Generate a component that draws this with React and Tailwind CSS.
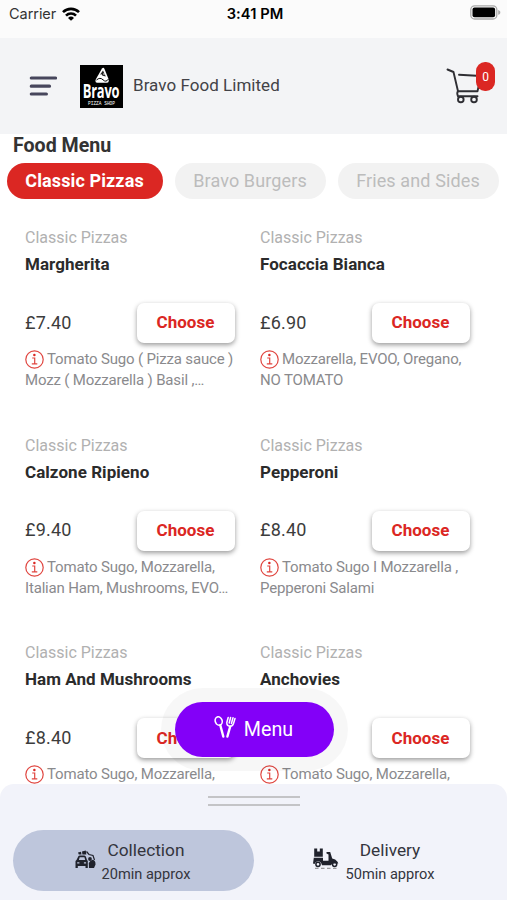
const tabs = [
  { name: 'Classic Pizzas', className: 'w-[156px] bg-[#db2723] text-white font-bold' },
  { name: 'Bravo Burgers', className: 'w-[151px] bg-[#f2f2f2] text-[#bcbcbc]' },
  { name: 'Fries and Sides', className: 'w-[161px] bg-[#f2f2f2] text-[#bcbcbc]' },
]

const items = [
  { name: 'Margherita', price: '£7.40', lines: ['Tomato Sugo ( Pizza sauce )', 'Mozz ( Mozzarella ) Basil ,…'] },
  { name: 'Focaccia Bianca', price: '£6.90', lines: ['Mozzarella, EVOO, Oregano,', 'NO TOMATO'] },
  { name: 'Calzone Ripieno', price: '£9.40', lines: ['Tomato Sugo, Mozzarella,', 'Italian Ham, Mushrooms, EVO…'] },
  { name: 'Pepperoni', price: '£8.40', lines: ['Tomato Sugo I Mozzarella ,', 'Pepperoni Salami'] },
  { name: 'Ham And Mushrooms', price: '£8.40', lines: ['Tomato Sugo, Mozzarella,'] },
  { name: 'Anchovies', price: '£8.40', lines: ['Tomato Sugo, Mozzarella,'] },
]

const WifiIcon = () => (
  <svg className="w-[18px] h-[14px]" viewBox="0 0 18 14" preserveAspectRatio="none" fill="none" stroke="#000" strokeWidth="2.6">
    <path d="M1 5.2a11.3 11.3 0 0116 0" />
    <path d="M4 8.6a7 7 0 0110 0" />
    <path d="M9 13.8L6 10.9a4.3 4.3 0 016 0z" fill="#000" stroke="none" />
  </svg>
)

const BatteryIcon = () => (
  <svg className="w-[31px] h-[15px]" viewBox="0 0 31 15" fill="none">
    <rect x="0.8" y="0.8" width="26" height="13.2" rx="3.8" stroke="#a9a9a9" strokeWidth="1.3" />
    <rect x="2.5" y="2.5" width="22.6" height="9.8" rx="2" fill="#000" />
    <path d="M28.2 5c1.4.4 2.1 1.3 2.1 2.4s-.7 2-2.1 2.4z" fill="#a9a9a9" />
  </svg>
)

const MenuLines = () => (
  <svg className="w-7 h-5" viewBox="0 0 28 20" stroke="#47465c" strokeWidth="3.2" strokeLinecap="round">
    <path d="M2.3 2H26.500M2.300 10.200H20.500M2.300 18H17.400" />
  </svg>
)

const Logo = () => (
  <div className="w-[43px] h-[43px] bg-black text-white flex flex-col items-center overflow-hidden">
    <svg className="w-[15px] h-4 mt-[2px] ml-[2px] shrink-0" viewBox="0 0 15 16">
      <path d="M1 12L7 1.5Q8.500-.2 9.500 2L13.500 12Q14.500 15.800 12 15.800H2Q-.5 15 1 12z" fill="#fff" />
      <path d="M4.800 8L8 3.500L10.800 9.500z" fill="#222" />
      <path d="M1.500 13Q5 9.800 8 12.800T13.500 12" fill="none" stroke="#000" strokeWidth="1" />
      <circle cx="6" cy="8.500" r="1.200" fill="#fff" />
      <circle cx="9" cy="7" r=".8" fill="#fff" />
    </svg>
    <div className="font-['Open_Sans',sans-serif] font-bold text-[17px] leading-[17px] tracking-[-0.300px] scale-x-[0.76] scale-y-[1.100] -mt-px">
      Bravo
    </div>
    <div className="font-['Liberation_Mono',monospace] text-[4.500px] leading-[5px] tracking-[0px] mt-[2px] whitespace-nowrap">
      PIZZA SHOP
    </div>
  </div>
)

const CartIcon = () => (
  <svg className="w-[36px] h-[36px]" viewBox="0 0 36 36" fill="none" stroke="#2e2e33" strokeWidth="1.9" strokeLinecap="round" strokeLinejoin="round">
    <path d="M1.500 1.500L7.500 4L12 23.200H31.500L35 8L13 6.800" />
    <path d="M12 23.200Q10.500 25 12 28.300H31.500" />
    <circle cx="14.800" cy="31.500" r="2.800" />
    <circle cx="28" cy="31.500" r="2.800" />
  </svg>
)

const InfoIcon = () => (
  <svg className="w-[19px] h-[19px] shrink-0" viewBox="0 0 19 19" fill="none" stroke="#e0453f">
    <circle cx="9.500" cy="9.500" r="8.700" strokeWidth="1.200" />
    <circle cx="9.400" cy="5" r="1.250" fill="#db2723" stroke="none" />
    <path d="M7.200 8H9.700V13.600M6.800 13.900H12.300" strokeWidth="1.200" />
  </svg>
)

const UtensilsIcon = () => (
  <svg className="w-[22px] h-[22px] mb-[5px]" viewBox="0 0 22 22" fill="none" stroke="#fff" strokeLinecap="round" strokeLinejoin="round">
    <ellipse cx="4.700" cy="5" rx="3.400" ry="4.300" transform="rotate(-20 4.700 5)" strokeWidth="1.600" />
    <path d="M6.300 9.200L9.300 20.500" strokeWidth="2.400" />
    <path d="M16.200 10.500L13.400 20.500" strokeWidth="2.400" />
    <path d="M14.200 1.500L12.800 6.500Q12.600 9.800 16 10.300Q18.500 10.500 19.500 7.500L21 2.500M16.600 1.500L15.200 7M19 1.800L17.400 7.500" strokeWidth="1.500" />
  </svg>
)

// car with a standing customer
const CollectionIcon = () => (
  <svg className="w-[21px] h-[19px] mb-[5px]" viewBox="0 0 21 19" fill="#20222c">
    <path d="M3 7Q3.300 5.500 4.700 5.500H9.300Q10.700 5.500 11 7L12 10L12.800 11V18H10.500V16H2.800V18H.5V11L1.500 10zM4.700 7.200L3.900 10H10.200L9.400 7.200z" fillRule="evenodd" />
    <path d="M2.200 12.800H4.400M8.900 12.800H11.100" stroke="#bec6dc" strokeWidth="1.300" />
    <path d="M3 2.500L6 1.800L6.500 4.500H3.800zM7 1.500L10.800.5L11.300 4.500H7.400z" />
    <path d="M11.500 1.500L14 4.500L18 5.500L19.500 10" fill="none" stroke="#20222c" strokeWidth="1.200" />
    <circle cx="15" cy="9" r="1.900" />
    <path d="M13.800 13Q15 10.500 17.500 9.800Q20.800 10.500 20.500 14.500L19 18H14z" />
  </svg>
)

// scooter loaded with boxes
const DeliveryIcon = () => (
  <svg className="w-[26px] h-[21px] mb-[6px]" viewBox="0 0 26 21" fill="#20222c">
    <path d="M1.200.5H4.200V3.500H6.800V.5H9.800V8.800H1.200z" />
    <path d="M.8 9.800H10V12.800H15.500V6.500L13.500 5.500V4H17.200L19.200 10.500Q22.500 11 24.500 13.800L25.300 15.500H19.500L17.800 17.300H9Q8 13.300 5 13.300Q2.500 13.300 1.500 16L0 15.500z" />
    <circle cx="5" cy="16.300" r="2.100" fill="none" stroke="#20222c" strokeWidth="1.500" />
    <circle cx="21.600" cy="16.300" r="2.100" fill="none" stroke="#20222c" strokeWidth="1.500" />
    <path d="M2 20.300H25" stroke="#777" strokeWidth=".9" strokeDasharray="3.500 2.500" />
  </svg>
)

const MenuItem = ({ item }) => (
  <div className="h-[207.700px] pt-[27px] whitespace-nowrap">
    <p className="text-[16px] leading-6 text-[#b1b1b1]">Classic Pizzas</p>
    <p className="mt-[2px] text-[17px] leading-6 tracking-[0.050px] font-bold text-[#2b2b2b]">{item.name}</p>
    <div className="mt-[27px] flex items-center justify-between w-[210px]">
      <span className="mb-[2px] text-[18px] tracking-[0.200px] text-[#3c3c3c]">{item.price}</span>
      <button className="w-[98px] h-10 rounded-[7px] bg-white text-[#db2723] text-[17px] tracking-[0.050px] pr-px font-bold shadow-[0_2px_5px_rgba(0,0,0,0.400)]">
        Choose
      </button>
    </div>
    <div className="mt-[6px] text-[15px] leading-[21px] tracking-[-0.170px] text-[#8a8a8d]">
      <div className="flex items-center gap-[3px]">
        <InfoIcon />
        <span>{item.lines[0]}</span>
      </div>
      {item.lines[1] && <p>{item.lines[1]}</p>}
    </div>
  </div>
)

const App = () => {
  return (
    <div className="relative w-[507px] h-[900px] overflow-hidden bg-white font-[Roboto,sans-serif] flex flex-col">
      {/* Status bar */}
      <div className="h-[38px] shrink-0 bg-[#fbfbfb] grid grid-cols-3 items-start pt-[5px] pl-[9px] pr-[6px] text-[15px] leading-[18px] font-[Inter,sans-serif]">
        <div className="flex items-center gap-[6px] text-[#333]">
          <span className="text-[14.500px] tracking-[-0.050px]">Carrier</span>
          <WifiIcon />
        </div>
        <div className="text-center font-semibold text-[14.700px] text-black tracking-[0.050px]">3:41 PM</div>
        <div className="flex justify-end">
          <BatteryIcon />
        </div>
      </div>

      {/* Header */}
      <header className="h-24 shrink-0 bg-[#f3f4f6] flex items-center pl-[29px]">
        <MenuLines />
        <div className="ml-[23px]">
          <Logo />
        </div>
        <h1 className="ml-[10px] text-[17px] tracking-[0.040px] text-[#424247]">Bravo Food Limited</h1>
        <div className="relative ml-auto mr-[25px]">
          <CartIcon />
          <span className="absolute -top-[6px] left-[30px] w-[19px] h-[29px] rounded-[9px] bg-[#db2723] text-white text-[12px] flex items-center justify-center">
            0
          </span>
        </div>
      </header>

      <main className="grow overflow-hidden">
        <h2 className="pl-[13px] text-[19.600px] leading-6 font-bold text-[#333]">Food Menu</h2>
        <div className="flex gap-3 pl-[7px] mt-[5px] whitespace-nowrap">
          {tabs.map((tab) => (
            <button key={tab.name} className={`h-9 pb-[2px] pr-px shrink-0 rounded-full text-[18px] tracking-[0.120px] ${tab.className}`}>
              {tab.name}
            </button>
          ))}
        </div>
        <div className="grid grid-cols-[235px_235px] pl-[25px]">
          {items.map((item) => (
            <MenuItem key={item.name} item={item} />
          ))}
        </div>
      </main>

      {/* Floating menu button */}
      <div className="absolute left-[161px] top-[688px] w-[187px] h-[83px] rounded-full bg-black/[0.030] p-[14px]">
        <button className="w-full h-full pr-[2px] rounded-full bg-[#8300f8] text-white text-[19.700px] flex items-center justify-center gap-2">
          <UtensilsIcon />
          <span>Menu</span>
        </button>
      </div>

      {/* Bottom sheet */}
      <footer className="h-[116px] shrink-0 rounded-t-[14px] bg-[#f2f3fa] text-[#34353d]">
        <div className="mx-auto w-[92px] h-[10px] mt-3 border-y-2 border-[#c4c4c7]" />
        <div className="flex mt-6 pl-[13px]">
          <div className="w-[241px] h-[61px] pt-[2px] pr-[2px] rounded-full bg-[#bec6dc] flex items-center justify-center gap-[6px]">
            <CollectionIcon />
            <div className="text-center">
              <p className="text-[17.300px] leading-6">Collection</p>
              <p className="text-[14.600px] leading-6">20min approx</p>
            </div>
          </div>
          <div className="w-[241px] h-[61px] pt-[2px] pr-[2px] flex items-center justify-center gap-[7px]">
            <DeliveryIcon />
            <div className="text-center">
              <p className="text-[17.300px] leading-6">Delivery</p>
              <p className="text-[14.600px] leading-6">50min approx</p>
            </div>
          </div>
        </div>
      </footer>
    </div>
  )
}

export default App
